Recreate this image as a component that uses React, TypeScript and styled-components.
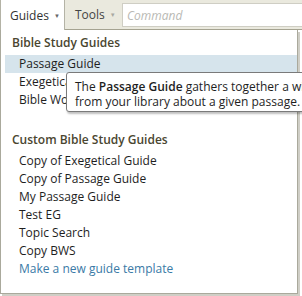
import styled, { createGlobalStyle } from "styled-components";

const GlobalStyle = createGlobalStyle`
  html, body {
    margin: 0;
    padding: 0;
    background: #ffffff;
    overflow: hidden;
  }
  body {
    font-family: "Open Sans", "Noto Sans", sans-serif;
    font-size: 12px;
    color: #222;
  }
`;

const builtIn = [
  { name: "Passage Guide", active: true },
  { name: "Exegetical Guide" },
  { name: "Bible Word Study" },
];

const custom = [
  "Copy of Exegetical Guide",
  "Copy of Passage Guide",
  "My Passage Guide",
  "Test EG",
  "Topic Search",
  "Copy BWS",
];

const App = () => {
  return (
    <Page>
      <GlobalStyle />
      <Toolbar>
        <Tab $active>
          Guides <Caret $dim={false}>▼</Caret>
        </Tab>
        <Tab $active={false}>
          Tools <Caret $dim>▼</Caret>
        </Tab>
        <CommandBox placeholder="Command" />
      </Toolbar>
      <Panel>
        <Section>
          <Heading>Bible Study Guides</Heading>
          {builtIn.map((item) => (
            <Row key={item.name} $active={!!item.active}>
              {item.name}
              {item.active && (
                <Tooltip>
                  The <b>Passage Guide</b> gathers together a wide range of
                  <br />
                  from your library about a given passage.
                </Tooltip>
              )}
            </Row>
          ))}
        </Section>
        <Section $spaced>
          <Heading>Custom Bible Study Guides</Heading>
          {custom.map((name) => (
            <Row key={name} $active={false}>
              {name}
            </Row>
          ))}
          <Row $active={false} $link>
            Make a new guide template
          </Row>
        </Section>
      </Panel>
    </Page>
  );
};

export default App;

const Page = styled.div`
  width: 302px;
  height: 296px;
  position: relative;
`;

const Toolbar = styled.div`
  display: flex;
  align-items: stretch;
  height: 29px;
  background: #eae9de;
  border-bottom: 1px solid #a5a391;
`;

const Tab = styled.div<{ $active: boolean }>`
  display: flex;
  align-items: center;
  gap: 5px;
  padding: 0 8px 0 ${(p) => (p.$active ? "9px" : "10px")};
  width: ${(p) => (p.$active ? "46px" : "36px")};
  color: ${(p) => (p.$active ? "#333" : "#444")};
  background: ${(p) => (p.$active ? "#ffffff" : "transparent")};
  border-left: ${(p) => (p.$active ? "1px solid #b4b3a6" : "none")};
  border-right: 1px solid ${(p) => (p.$active ? "#b4b3a6" : "transparent")};
  margin-bottom: ${(p) => (p.$active ? "-1px" : "0")};
  font-size: 12px;
`;

const Caret = styled.span<{ $dim: boolean }>`
  font-size: 6px;
  color: ${(p) => (p.$dim ? "#a8a8a0" : "#666")};
  margin-top: 1px;
`;

const CommandBox = styled.input`
  flex: 1;
  min-width: 0;
  margin: 3px 0 2px 2px;
  padding: 0 4px;
  border: 1px solid #cfcec4;
  border-right: none;
  background: #ffffff;
  font-family: "Open Sans", sans-serif;
  font-size: 12px;
  font-style: italic;
  outline: none;
  &::placeholder {
    color: #b9b9b4;
  }
`;

const Panel = styled.div`
  width: 296px;
  height: 263px;
  background: #ffffff;
  border: 1px solid #aaa99c;
  border-top: none;
  box-shadow: 2px 2px 0 #cfcec6;
`;

const Section = styled.div<{ $spaced?: boolean }>`
  display: flex;
  flex-direction: column;
  padding-top: 4px;
  margin-top: ${(p) => (p.$spaced ? "18px" : "0")};
`;

const Heading = styled.div`
  height: 18px;
  line-height: 18px;
  margin-bottom: 3px;
  padding-left: 11px;
  font-weight: 600;
  color: #4a4630;
`;

const Row = styled.div<{ $active: boolean; $link?: boolean }>`
  position: relative;
  height: 18px;
  line-height: 18px;
  margin-left: 4px;
  padding-left: 14px;
  white-space: nowrap;
  background: ${(p) => (p.$active ? "#d6e4ec" : "transparent")};
  color: ${(p) => (p.$link ? "#3a7aa6" : "#1e1e1e")};
`;

const Tooltip = styled.div`
  position: absolute;
  left: 61px;
  top: 17px;
  z-index: 2;
  width: 300px;
  padding: 6px 8px 2px 8px;
  line-height: 15px;
  background: #ffffff;
  color: #1e1e1e;
  border: 1px solid #7a7a7a;
  border-radius: 3px;
  box-shadow: 1px 2px 2px rgba(0, 0, 0, 0.25);
  b {
    font-weight: 600;
  }
`;
